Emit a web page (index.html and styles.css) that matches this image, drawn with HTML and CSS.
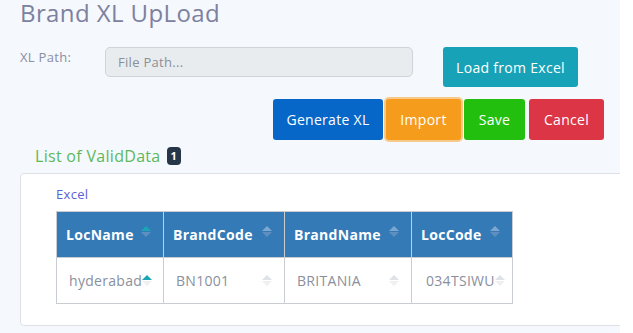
FILE: index.html
```html
<!DOCTYPE html>
<html lang="en">
<head>
  <meta charset="UTF-8">
  <title>Brand XL UpLoad</title>
  <link rel="stylesheet" href="styles.css">
</head>
<body>
  <div class="page">
    <h2 class="title">Brand XL UpLoad</h2>
    <div class="path-row">
      <label class="path-label">XL Path:</label>
      <input class="path-input" type="text" placeholder="File Path..." disabled>
      <button class="btn btn-info">Load from Excel</button>
    </div>
    <div class="actions">
      <button class="btn btn-primary">Generate XL</button>
      <button class="btn btn-warning focus">Import</button>
      <button class="btn btn-success">Save</button>
      <button class="btn btn-danger">Cancel</button>
    </div>
    <div class="list-title">List of ValidData <span class="badge">1</span></div>
    <div class="card">
      <a class="excel-link">Excel</a>
      <table class="grid">
        <thead>
          <tr>
            <th class="c1">LocName <span class="sort"><i class="up on"></i><i class="down"></i></span></th>
            <th class="c2">BrandCode <span class="sort"><i class="up"></i><i class="down"></i></span></th>
            <th class="c3">BrandName <span class="sort"><i class="up"></i><i class="down"></i></span></th>
            <th class="c4">LocCode <span class="sort"><i class="up"></i><i class="down"></i></span></th>
          </tr>
        </thead>
        <tbody>
          <tr>
            <td><span class="cell">hyderabad<span class="sort light"><i class="up on"></i><i class="down"></i></span></span></td>
            <td><span class="cell spread">BN1001<span class="sort light"><i class="up"></i><i class="down"></i></span></span></td>
            <td><span class="cell spread">BRITANIA<span class="sort light"><i class="up"></i><i class="down"></i></span></span></td>
            <td class="c4"><span class="cell">034TSIWU<span class="sort light"><i class="up"></i><i class="down"></i></span></span></td>
          </tr>
        </tbody>
      </table>
    </div>
  </div>
</body>
</html>
```

FILE: styles.css
```css
body {margin:0; background:#fff; font-family:"Open Sans", "Noto Sans", sans-serif;}
.page {width:620px; height:333px; background:#f5f8fd; overflow:hidden; box-sizing:border-box;}
.title {margin:0; padding:0 0 0 20px; height:30px; line-height:26px; font-size:24px; font-weight:500; color:#7c819f; letter-spacing:0.4px;}
.path-row {display:flex; align-items:flex-start; margin-top:17px; height:40px;}
.path-label {width:85px; padding-left:20px; font-size:13px; color:#8a8fa3; line-height:20px; letter-spacing:0.3px;}
.path-input {width:308px; height:30px; box-sizing:border-box; border:1px solid #ced4da; border-radius:5px; background:#e9ecef; padding:0 12px; font-family:inherit; font-size:13px; margin:0; letter-spacing:0.3px;}
.path-input::placeholder {color:#8a8f99;}
.btn {border:none; border-radius:3px; color:#fff; font-family:inherit; font-size:14px; height:41px; padding:0; cursor:pointer; letter-spacing:0.3px;}
.btn-info {background:#17a2b8; width:135px; height:40px; margin-left:30px;}
.actions {display:flex; justify-content:flex-end; gap:3px; padding-right:16px; margin-top:12px;}
.btn-primary {background:#0667c9; width:110px;}
.btn-warning {background:#f59c1c; width:75px;}
.btn-warning.focus {box-shadow:0 0 0 2px #f7c98a;}
.btn-success {background:#23bf0e; width:61px;}
.btn-danger {background:#dc3545; width:75px; margin-left:1px;}
.list-title {margin:6px 0 0 35px; font-size:16px; color:#5db85c; line-height:20px; display:flex; align-items:center; gap:6px; letter-spacing:0.3px;}
.badge {display:inline-block; background:#263548; color:#fff; font-size:11px; font-weight:700; border-radius:4px; width:14px; height:18px; line-height:18px; text-align:center; letter-spacing:0;}
.card {margin:7px 0 0 20px; width:620px; height:153px; background:#fff; border:1px solid #dde1e6; border-radius:4px; box-sizing:border-box; padding:11px 0 0 35px;}
.excel-link {display:block; font-size:13px; color:#5b61d6; line-height:18px; letter-spacing:0.3px;}
.grid {border-collapse:collapse; table-layout:fixed; width:457px; margin-top:8px; font-size:14px;}
.grid th, .grid td {border:1px solid #c9ccd1; height:46px; box-sizing:border-box; padding:0; overflow:visible;}
.grid th {background:#337ab7; color:#fff; text-align:left; font-weight:700; padding:0 12px 0 9px; white-space:nowrap; letter-spacing:0.3px;}
.grid th .sort {float:right; margin-top:1px;}
.grid .c1 {width:107px;}
.grid .c2 {width:121px;}
.grid .c3 {width:127px;}
.grid .c4 {width:101px;}
.grid td {color:#8a8f9e; padding:0 8px 0 12px; letter-spacing:0.3px; white-space:nowrap;}
.grid td + td {padding-right:12px;}
.grid td.c4 {padding:0 6px 0 14px;}
.cell {display:flex; align-items:center;}
.cell.spread {justify-content:space-between;}
.sort {display:inline-flex; flex-direction:column; gap:1px; vertical-align:middle; flex-shrink:0;}
.sort i {display:block; width:0; height:0; border-left:5px solid transparent; border-right:5px solid transparent;}
.sort .up {border-bottom:5px solid #7ea7cf;}
.sort .down {border-top:5px solid #5f8fc0;}
.sort .up.on {border-bottom-color:#1aa7b5;}
.sort.light .up {border-bottom-color:#dfe2e6;}
.sort.light .down {border-top-color:#eef0f2;}
.sort.light .up.on {border-bottom-color:#1aa7b5;}
```
